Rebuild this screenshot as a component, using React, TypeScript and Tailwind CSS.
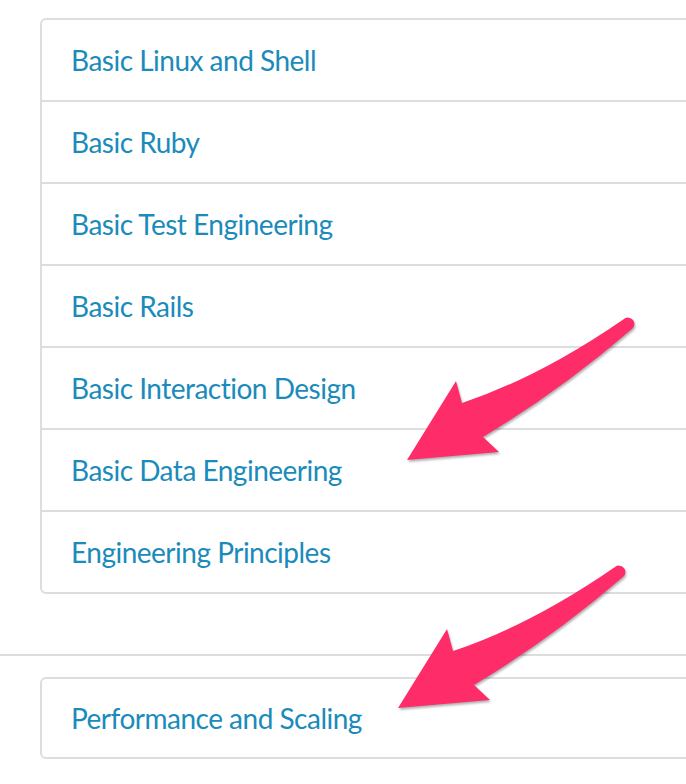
const topics = [
  "Basic Linux and Shell",
  "Basic Ruby",
  "Basic Test Engineering",
  "Basic Rails",
  "Basic Interaction Design",
  "Basic Data Engineering",
  "Engineering Principles",
];

function Arrow({ className }: { className: string }) {
  return (
    <svg
      width="240"
      height="150"
      viewBox="0 0 240 150"
      className={className}
    >
      <path
        d="M7,145 L56,66 L62,88 Q140,62 224,4 A6,6 0 0 1 232,14 Q160,76 83,122 L99,137 Z"
        fill="#fe2d6a"
      />
    </svg>
  );
}

function TopicRow({ title, last, h }: { title: string; last?: boolean; h?: string }) {
  return (
    <div
      className={
        "flex items-center pl-[29px] " +
        (h ?? "") +
        (last ? "" : " border-b-2 border-[#dddddd]")
      }
    >
      <a className="text-[28px] text-[#1a8bba] tracking-[-0.5px]">{title}</a>
    </div>
  );
}

export default function App() {
  return (
    <div
      className="relative w-[686px] h-[784px] overflow-hidden bg-white"
      style={{ fontFamily: '"Lato", "Liberation Sans", sans-serif' }}
    >
      <div className="pt-[18px] pl-[40px]">
        <div className="w-[680px] border-2 border-[#dddddd] rounded-[6px]">
          {topics.map((t, i) => {
            const last = i === topics.length - 1;
            return (
              <TopicRow
                key={t}
                title={t}
                last={last}
                h={last ? "h-[80px]" : "h-[82px]"}
              />
            );
          })}
        </div>
      </div>

      <div className="mt-[60px] border-t-2 border-[#dddddd]" />

      <div className="pt-[21px] pl-[40px]">
        <div className="w-[680px] border-2 border-[#dddddd] rounded-[6px]">
          <TopicRow title="Performance and Scaling" last h="h-[78px]" />
        </div>
      </div>

      <Arrow className="absolute left-[400px] top-[315px] drop-shadow-[1px_2px_1px_rgba(0,0,0,0.3)]" />
      <Arrow className="absolute left-[391px] top-[563px] drop-shadow-[1px_2px_1px_rgba(0,0,0,0.3)]" />
    </div>
  );
}
